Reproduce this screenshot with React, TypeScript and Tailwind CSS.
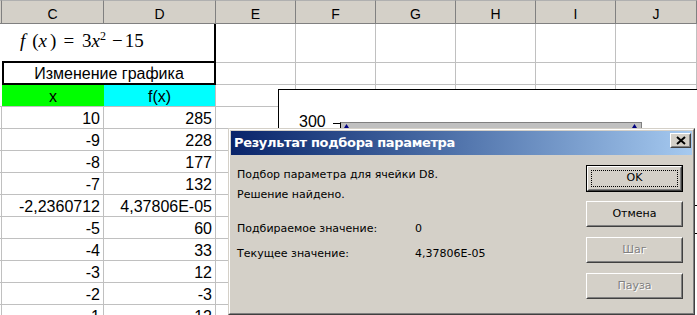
import React from "react";

const SHEET_FONT = { fontFamily: '"Liberation Sans", Arial, sans-serif' };
const DLG_FONT = { fontFamily: '"DejaVu Sans", Tahoma, sans-serif' };
const SERIF = { fontFamily: '"Liberation Serif", "Times New Roman", serif' };

const data: [string, string][] = [
  ["10", "285"],
  ["-9", "228"],
  ["-8", "177"],
  ["-7", "132"],
  ["-2,2360712", "4,37806E-05"],
  ["-5", "60"],
  ["-4", "33"],
  ["-3", "12"],
  ["-2", "-3"],
  ["-1", "-12"],
];

const OTHER = ["E", "F", "G", "H", "I", "J"];
const GRID = "grid grid-cols-[2px_102px_112px_80px_80px_80px_80px_80px_81px]";

function OtherCells({ h, row }: { h: string; row: string }) {
  return (
    <>
      {OTHER.map((c) => (
        <div key={row + c} className={`${h} border-r border-b border-[#c0c0c0]`} />
      ))}
    </>
  );
}

function Btn({ label, disabled }: { label: string; disabled?: boolean }) {
  return (
    <div className="h-[26px] border border-t-white border-l-white border-r-[#404040] border-b-[#404040]">
      <div className="h-full border border-t-[#d4d0c8] border-l-[#d4d0c8] border-r-[#808080] border-b-[#808080] flex items-center justify-center">
        <span
          className={
            disabled
              ? "text-[#808080] [text-shadow:1px_1px_0_#ffffff]"
              : "text-black"
          }
        >
          {label}
        </span>
      </div>
    </div>
  );
}

export default function App() {
  return (
    <div
      className="relative w-[697px] h-[315px] overflow-hidden bg-white text-black"
      style={SHEET_FONT}
    >
      <div className={GRID}>
        {/* header row */}
        <div className="h-[24px] bg-[#d4d0c8] border-t border-b border-r border-[#808080] border-t-[#b0b0b0]" />
        {["C", "D", ...OTHER].map((l) => (
          <div
            key={"h" + l}
            className="h-[24px] bg-[#d4d0c8] border-t border-b border-r border-[#808080] border-t-[#b0b0b0] text-center text-[14px] leading-[16px] pt-[5px]"
          >
            {l}
          </div>
        ))}

        {/* row 1: formula */}
        <div className="h-[39px]" />
        <div className="col-span-2 h-[39px] border-r-2 border-b-2 border-black pt-[5px] pl-[18px]">
          <div className="flex items-baseline text-[19px] leading-[24px]" style={SERIF}>
            <span className="italic">f</span>
            <span className="ml-[7px]">(</span>
            <span className="italic">x</span>
            <span className="ml-[3px]">)</span>
            <span className="ml-[7px]">=</span>
            <span className="ml-[8px]">3</span>
            <span className="italic">x</span>
            <span className="relative -top-[7px] text-[12px]">2</span>
            <span className="ml-[6px]">−</span>
            <span className="ml-[2px]">15</span>
          </div>
        </div>
        <OtherCells h="h-[39px]" row="r1" />

        {/* row 2 */}
        <div className="h-[22px]" />
        <div className="col-span-2 h-[22px] border-l-2 border-r-2 border-b-2 border-black flex items-end justify-center text-[16px] leading-[18px]">
          Изменение графика
        </div>
        <OtherCells h="h-[22px]" row="r2" />

        {/* row 3 */}
        <div className="h-[22px] border-b border-[#c0c0c0]" />
        <div className="h-[22px] bg-[#00ff00] border-b border-[#c0c0c0] flex items-end justify-center text-[16px] leading-[18px]">
          x
        </div>
        <div className="h-[22px] bg-[#00ffff] border-b border-r border-[#c0c0c0] flex items-end justify-center text-[16px] leading-[18px]">
          f(x)
        </div>
        <OtherCells h="h-[22px]" row="r3" />

        {/* data rows */}
        {data.map(([x, y], i) => (
          <React.Fragment key={"d" + i}>
            <div className="h-[22px] border-b border-r border-[#c0c0c0]" />
            <div className="h-[22px] border-b border-r border-[#c0c0c0] flex items-end justify-end pr-[3px] text-[16px] leading-[18px]">
              {x}
            </div>
            <div className="h-[22px] border-b border-r border-[#c0c0c0] flex items-end justify-end pr-[3px] text-[16px] leading-[18px]">
              {y}
            </div>
            <OtherCells h="h-[22px]" row={"d" + i} />
          </React.Fragment>
        ))}
      </div>

      {/* chart object */}
      <div className="absolute left-[278px] top-[89px] w-[430px] h-[240px] border border-black bg-white">
        <div className="absolute left-[20px] top-[23px] text-[16px] leading-[18px]">300</div>
        <div className="absolute left-[54px] top-[33px] w-[7px] h-px bg-black" />
        <div className="absolute left-[61px] top-[32px] w-[302px] h-[220px] bg-[#c0c0c0] border-l border-t border-r border-l-black border-t-[#808080] border-r-[#808080]" />
        <svg className="absolute left-[65px] top-[34px]" width="5" height="4" viewBox="0 0 5 4">
          <polygon points="2.5,0 5,4 0,4" fill="#000080" />
        </svg>
        <svg className="absolute left-[353px] top-[34px]" width="5" height="4" viewBox="0 0 5 4">
          <polygon points="2.5,0 5,4 0,4" fill="#000080" />
        </svg>
        <div className="absolute left-[414px] top-[115px] w-[6px] h-px bg-black" />
        <div className="absolute left-[414px] top-[143px] w-[6px] h-px bg-black" />
      </div>

      {/* dialog window */}
      <div
        className="absolute left-[228px] top-[128px] w-[467px] h-[187px] border border-t-[#d4d0c8] border-l-[#d4d0c8] border-r-[#404040] border-b-[#404040] bg-[#d4d0c8] text-[11px]"
        style={DLG_FONT}
      >
        <div className="h-full border border-t-white border-l-white border-r-[#808080] border-b-[#808080] p-px flex flex-col">
          <div className="h-[24px] bg-linear-to-r from-[#0a246a] to-[#a6caf0] flex items-start pl-[3px] pr-px">
            <div className="flex-1 pt-[4px] text-white font-bold text-[13px] leading-[16px] tracking-[-0.35px] whitespace-nowrap">
              Результат подбора параметра
            </div>
            <div className="mt-[2px] w-[21px] h-[15px] bg-[#d4d0c8] border border-t-white border-l-white border-r-[#404040] border-b-[#404040]">
              <div className="h-full border border-t-[#d4d0c8] border-l-[#d4d0c8] border-r-[#808080] border-b-[#808080] flex items-center justify-center">
                <svg width="10" height="9" viewBox="0 0 10 9">
                  <path d="M1 1 L9 8 M9 1 L1 8" stroke="#000" strokeWidth="2" />
                </svg>
              </div>
            </div>
          </div>

          <div className="flex flex-1">
            <div className="flex-1 pl-[6px] leading-[13px]">
              <div className="mt-[13px] h-[13px]">Подбор параметра для ячейки D8.</div>
              <div className="mt-[7px] h-[13px]">Решение найдено.</div>
              <div className="mt-[21px] h-[13px] flex">
                <span className="w-[178px]">Подбираемое значение:</span>
                <span>0</span>
              </div>
              <div className="mt-[12px] h-[13px] flex">
                <span className="w-[178px]">Текущее значение:</span>
                <span>4,37806E-05</span>
              </div>
            </div>

            <div className="w-[97px] mr-[9px] mt-[10px] flex flex-col">
              <div className="h-[27px] border border-black">
                <div className="h-full border border-t-white border-l-white border-r-[#404040] border-b-[#404040]">
                  <div className="h-full border border-t-[#d4d0c8] border-l-[#d4d0c8] border-r-[#808080] border-b-[#808080] p-[2px]">
                    <div className="h-full border border-dotted border-black flex items-center justify-center">
                      OK
                    </div>
                  </div>
                </div>
              </div>
              <div className="mt-[9px]">
                <Btn label="Отмена" />
              </div>
              <div className="mt-[10px]">
                <Btn label="Шаг" disabled />
              </div>
              <div className="mt-[10px]">
                <Btn label="Пауза" disabled />
              </div>
            </div>
          </div>
        </div>
      </div>
    </div>
  );
}
